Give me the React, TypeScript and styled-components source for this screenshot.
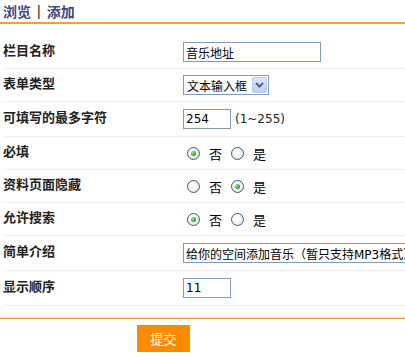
import React from "react";
import styled, { createGlobalStyle } from "styled-components";

const GlobalStyle = createGlobalStyle`
  body {
    margin: 0;
    background: #fff;
    overflow: hidden;
    font-family: "Noto Sans CJK SC", sans-serif;
  }
`;

const Page = styled.div`
  width: 405px;
  height: 357px;
  overflow: hidden;
`;

const Header = styled.div`
  height: 24px;
  box-sizing: border-box;
  padding-left: 3px;
  display: flex;
  align-items: center;
  gap: 6px;
  border-bottom: 2px solid #e8a33d;
  font-size: 14px;
  font-weight: 700;
  color: #3d4785;
  line-height: 1;
`;

const Sep = styled.span`
  font-weight: 400;
  color: #222;
  font-family: "Liberation Sans", sans-serif;
`;

const Form = styled.div`
  margin-left: 3px;
  padding-top: 12px;
`;

const Row = styled.div<{ $h: number }>`
  height: ${(p) => p.$h}px;
  box-sizing: border-box;
  display: grid;
  grid-template-columns: 180px 1fr;
  align-items: center;
  border-bottom: 1px solid #eeeeee;
`;

const Label = styled.div`
  font-size: 13px;
  font-weight: 700;
  color: #222;
  padding-bottom: 5px;
  line-height: 1;
`;

const Field = styled.div`
  display: flex;
  align-items: center;
  white-space: nowrap;
`;

const TextInput = styled.input<{ $w: number }>`
  width: ${(p) => p.$w}px;
  height: 20px;
  box-sizing: border-box;
  border: 1px solid #7f9db9;
  padding: 0 2px;
  margin: 0;
  font-family: "DejaVu Sans", "Noto Sans CJK SC", sans-serif;
  font-size: 12px;
  color: #000;
  outline: none;
  flex-shrink: 0;
`;

const Hint = styled.span`
  margin-left: 4px;
  font-family: "DejaVu Sans", sans-serif;
  font-size: 12px;
  color: #222;
`;

const SelectBox = styled.div`
  width: 86px;
  height: 20px;
  box-sizing: border-box;
  border: 1px solid #7f9db9;
  display: flex;
  align-items: center;
  justify-content: space-between;
  padding: 1px 1px 1px 3px;
  font-size: 12px;
  color: #000;
`;

const Arrow = styled.span`
  width: 15px;
  height: 16px;
  box-sizing: border-box;
  border: 1px solid #b9cbf0;
  border-radius: 2px;
  background: linear-gradient(#dde8fd, #b9cdf6);
  display: flex;
  align-items: center;
  justify-content: center;
`;

const RadioDot = styled.span<{ $on?: boolean }>`
  width: 13px;
  height: 13px;
  box-sizing: border-box;
  border-radius: 50%;
  border: 1px solid #3a5a80;
  background: radial-gradient(circle at 40% 40%, #fff 0%, #f2f2ee 50%, #d6d6d0 100%);
  display: inline-flex;
  align-items: center;
  justify-content: center;
  margin-left: 4px;
  &::after {
    content: "";
    display: ${(p) => (p.$on ? "block" : "none")};
    width: 5px;
    height: 5px;
    border-radius: 50%;
    background: radial-gradient(circle at 35% 35%, #9be39b, #21a121 70%);
  }
`;

const RadioText = styled.span`
  margin-left: 9px;
  margin-right: 5px;
  font-size: 13px;
  color: #000;
`;

const Footer = styled.div`
  margin-top: 12px;
  border-top: 1px solid #e8963a;
  box-shadow: 0 -1px 0 #fbe6c6;
  padding-top: 6px;
  padding-left: 137px;
`;

const SubmitButton = styled.button`
  width: 53px;
  height: 27px;
  border: none;
  margin: 0;
  padding: 0;
  background: #fb8c00;
  color: #fff;
  font-family: "Noto Sans CJK SC", sans-serif;
  font-size: 13px;
`;

const YesNo: React.FC<{ yes: boolean }> = ({ yes }) => (
  <Field>
    <RadioDot $on={!yes} />
    <RadioText>否</RadioText>
    <RadioDot $on={yes} />
    <RadioText>是</RadioText>
  </Field>
);

const App: React.FC = () => {
  return (
    <Page>
      <GlobalStyle />
      <Header>
        <span>浏览</span>
        <Sep>|</Sep>
        <span>添加</span>
      </Header>
      <Form>
        <Row $h={33}>
          <Label>栏目名称</Label>
          <Field>
            <TextInput $w={138} defaultValue="音乐地址" />
          </Field>
        </Row>
        <Row $h={33}>
          <Label>表单类型</Label>
          <Field>
            <SelectBox>
              <span>文本输入框</span>
              <Arrow>
                <svg width="9" height="6" viewBox="0 0 9 6">
                  <path d="M1 1 L4.5 4.5 L8 1" fill="none" stroke="#4d6185" strokeWidth="2" />
                </svg>
              </Arrow>
            </SelectBox>
          </Field>
        </Row>
        <Row $h={35}>
          <Label>可填写的最多字符</Label>
          <Field>
            <TextInput $w={48} defaultValue="254" />
            <Hint>(1~255)</Hint>
          </Field>
        </Row>
        <Row $h={33}>
          <Label>必填</Label>
          <YesNo yes={false} />
        </Row>
        <Row $h={33}>
          <Label>资料页面隐藏</Label>
          <YesNo yes={true} />
        </Row>
        <Row $h={33}>
          <Label>允许搜索</Label>
          <YesNo yes={false} />
        </Row>
        <Row $h={35}>
          <Label>简单介绍</Label>
          <Field>
            <TextInput $w={300} defaultValue="给你的空间添加音乐（暂只支持MP3格式）" />
          </Field>
        </Row>
        <Row $h={35}>
          <Label>显示顺序</Label>
          <Field>
            <TextInput $w={48} defaultValue="11" />
          </Field>
        </Row>
      </Form>
      <Footer>
        <SubmitButton>提交</SubmitButton>
      </Footer>
    </Page>
  );
};

export default App;
